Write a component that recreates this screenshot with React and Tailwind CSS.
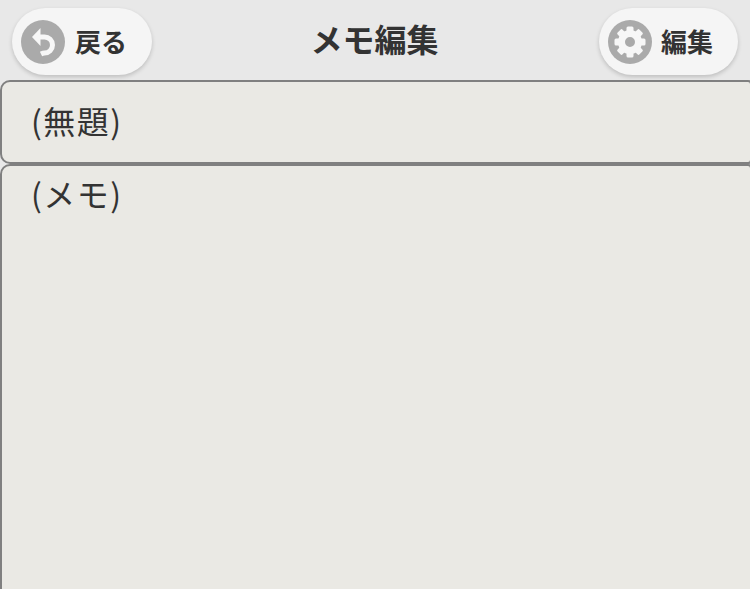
const font = "font-['Noto_Sans_CJK_JP','Noto_Sans_CJK_SC',sans-serif]";

function BackIcon() {
  return (
    <svg viewBox="0 0 44 44" className="w-[44px] h-[44px]">
      <circle cx="22" cy="22" r="22" fill="#aaaaaa" />
      <path d="M18 17 H23.5 A8 8 0 0 1 23.5 33 Q22 33 20 34" fill="none" stroke="#f7f7f7" strokeWidth="5" />
      <path d="M19.5 8 L11 17 L19.5 26 Z" fill="#f7f7f7" />
    </svg>
  );
}

function GearIcon() {
  return (
    <svg viewBox="0 0 44 44" className="w-[44px] h-[44px]">
      <circle cx="22" cy="22" r="22" fill="#aaaaaa" />
      <circle cx="22" cy="22" r="8.5" fill="none" stroke="#f7f7f7" strokeWidth="7" />
      {[0, 45, 90, 135, 180, 225, 270, 315].map((a) => (
        <rect key={a} x="18.5" y="6.5" width="7" height="6" rx="1.5" fill="#f7f7f7" transform={`rotate(${a} 22 22)`} />
      ))}
    </svg>
  );
}

function Pill({ icon, label, className }) {
  return (
    <button className={`h-[67px] flex items-center rounded-full bg-[#f5f5f5] shadow-[0_2px_4px_rgba(0,0,0,0.18)] ${className}`}>
      {icon}
      <span className="text-[26px] font-bold text-[#333] leading-none pb-[2px]">{label}</span>
    </button>
  );
}

export default function App() {
  return (
    <div className={`h-[589px] w-[750px] overflow-hidden bg-[#e8e8e8] ${font}`}>
      <div className="h-[80px] flex items-start justify-between pt-2 pl-3 pr-3 relative">
        <Pill icon={<BackIcon />} label="戻る" className="w-[140px] pl-[9px] gap-[10px]" />
        <h1 className="absolute left-0 w-[749px] top-[15px] text-center text-[32px] leading-[46px] font-bold text-[#333]">メモ編集</h1>
        <Pill icon={<GearIcon />} label="編集" className="w-[139px] pl-[9px] gap-[9px]" />
      </div>
      <div className="w-[752px] h-[84px] border-2 border-[#808080] rounded-l-[10px] rounded-r-[4px] bg-[#eae9e4] pl-[29px] pb-[4px] flex items-center text-[32px] tracking-[1.5px] text-[#333] leading-none">
        (無題)
      </div>
      <div className="w-[752px] h-[440px] border-2 border-[#808080] rounded-l-[10px] rounded-r-[4px] bg-[#eae9e4] pl-[29px] pt-[4px] text-[32px] tracking-[1.5px] text-[#333] leading-[46px]">
        (メモ)
      </div>
    </div>
  );
}
